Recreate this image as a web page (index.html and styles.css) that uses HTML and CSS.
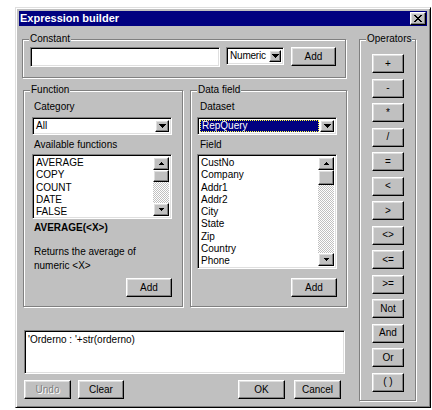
FILE: index.html
```html
<!DOCTYPE html>
<html>
<head>
<meta charset="utf-8">
<title>Expression builder</title>
<link rel="stylesheet" href="styles.css">
</head>
<body>
<div class="dialog">
  <div class="titlebar">
    <span class="title">Expression builder</span>
    <button class="close" aria-label="Close">
      <svg width="8" height="7" viewBox="0 0 8 7" shape-rendering="crispEdges">
        <rect x="0" y="0" width="2" height="1"/><rect x="6" y="0" width="2" height="1"/>
        <rect x="1" y="1" width="2" height="1"/><rect x="5" y="1" width="2" height="1"/>
        <rect x="2" y="2" width="4" height="1"/>
        <rect x="3" y="3" width="2" height="1"/>
        <rect x="2" y="4" width="4" height="1"/>
        <rect x="1" y="5" width="2" height="1"/><rect x="5" y="5" width="2" height="1"/>
        <rect x="0" y="6" width="2" height="1"/><rect x="6" y="6" width="2" height="1"/>
      </svg>
    </button>
  </div>

  <div class="client">
    <div class="main">
      <fieldset class="group constant">
        <legend>Constant</legend>
        <div class="group-body const-row">
          <div class="edit const-edit"></div>
          <div class="combo numeric">
            <span class="combo-text">Numeric</span>
            <span class="drop"><svg width="7" height="4" viewBox="0 0 7 4" shape-rendering="crispEdges"><path d="M0 0h7v1h-1v1h-1v1h-1v1h-1v-1h-1v-1h-1v-1h-1z"/></svg></span>
          </div>
          <button class="btn add-const">Add</button>
        </div>
      </fieldset>

      <div class="pickers">
        <fieldset class="group function">
          <legend>Function</legend>
          <div class="group-body picker-body">
            <div class="label">Category</div>
            <div class="combo">
              <span class="combo-text">All</span>
              <span class="drop"><svg width="7" height="4" viewBox="0 0 7 4" shape-rendering="crispEdges"><path d="M0 0h7v1h-1v1h-1v1h-1v1h-1v-1h-1v-1h-1v-1h-1z"/></svg></span>
            </div>
            <div class="label">Available functions</div>
            <div class="list list-func">
              <ul class="items">
                <li>AVERAGE</li>
                <li>COPY</li>
                <li>COUNT</li>
                <li>DATE</li>
                <li>FALSE</li>
              </ul>
              <div class="vscroll">
                <span class="arrow"><svg width="5" height="3" viewBox="0 0 5 3" shape-rendering="crispEdges"><path d="M2 0h1v1h1v1h1v1h-5v-1h1v-1h1z"/></svg></span>
                <span class="thumb thumb-func"></span>
                <span class="track"></span>
                <span class="arrow"><svg width="5" height="3" viewBox="0 0 5 3" shape-rendering="crispEdges"><path d="M0 0h5v1h-1v1h-1v1h-1v-1h-1v-1h-1z"/></svg></span>
              </div>
            </div>
            <div class="func-name">AVERAGE(&lt;X&gt;)</div>
            <div class="func-desc">Returns the average of<br>numeric &lt;X&gt;</div>
            <button class="btn add-func">Add</button>
          </div>
        </fieldset>

        <fieldset class="group datafield">
          <legend>Data field</legend>
          <div class="group-body picker-body">
            <div class="label">Dataset</div>
            <div class="combo focused">
              <span class="combo-text"><span class="selected">RepQuery</span></span>
              <span class="drop"><svg width="7" height="4" viewBox="0 0 7 4" shape-rendering="crispEdges"><path d="M0 0h7v1h-1v1h-1v1h-1v1h-1v-1h-1v-1h-1v-1h-1z"/></svg></span>
            </div>
            <div class="label">Field</div>
            <div class="list list-field">
              <ul class="items">
                <li>CustNo</li>
                <li>Company</li>
                <li>Addr1</li>
                <li>Addr2</li>
                <li>City</li>
                <li>State</li>
                <li>Zip</li>
                <li>Country</li>
                <li>Phone</li>
              </ul>
              <div class="vscroll">
                <span class="arrow"><svg width="5" height="3" viewBox="0 0 5 3" shape-rendering="crispEdges"><path d="M2 0h1v1h1v1h1v1h-5v-1h1v-1h1z"/></svg></span>
                <span class="thumb thumb-field"></span>
                <span class="track"></span>
                <span class="arrow"><svg width="5" height="3" viewBox="0 0 5 3" shape-rendering="crispEdges"><path d="M0 0h5v1h-1v1h-1v1h-1v-1h-1v-1h-1z"/></svg></span>
              </div>
            </div>
            <button class="btn add-field">Add</button>
          </div>
        </fieldset>
      </div>

      <div class="edit memo">'Orderno : '+str(orderno)</div>

      <div class="actions">
        <button class="btn undo" disabled>Undo</button>
        <button class="btn clear">Clear</button>
        <button class="btn ok">OK</button>
        <button class="btn cancel">Cancel</button>
      </div>
    </div>

    <fieldset class="group operators">
      <legend>Operators</legend>
      <div class="group-body op-list">
        <button class="btn op">+</button>
        <button class="btn op">-</button>
        <button class="btn op">*</button>
        <button class="btn op">/</button>
        <button class="btn op">=</button>
        <button class="btn op">&lt;</button>
        <button class="btn op">&gt;</button>
        <button class="btn op">&lt;&gt;</button>
        <button class="btn op">&lt;=</button>
        <button class="btn op">&gt;=</button>
        <button class="btn op">Not</button>
        <button class="btn op">And</button>
        <button class="btn op">Or</button>
        <button class="btn op">( )</button>
      </div>
    </fieldset>
  </div>
</div>
</body>
</html>
```

FILE: styles.css
```css
* {
  box-sizing: border-box;
}

body {
  margin: 0;
  background: #fff;
  color: #000;
  font: 10px/12px "Liberation Sans", Arial, sans-serif;
}

/* Window frame */
.dialog {
  margin: 7px 0 0 15px;
  width: 416px;
  height: 401px;
  padding: 3px;
  background: #c0c0c0;
  border: 1px solid;
  border-color: #dfdfdf #000 #000 #dfdfdf;
  box-shadow: inset 1px 1px #fff, inset -1px -1px #808080;
}

.titlebar {
  height: 15px;
  background: #000080;
  display: flex;
  align-items: center;
  justify-content: space-between;
  padding: 0 1px;
}

.title {
  color: #fff;
  font-weight: bold;
  font-size: 11px;
  line-height: 13px;
}

.close {
  width: 16px;
  height: 13px;
  padding: 0;
  display: flex;
  align-items: center;
  justify-content: center;
  background: #c0c0c0;
  border: 1px solid;
  border-color: #fff #000 #000 #fff;
  box-shadow: inset -1px -1px #808080, inset 1px 1px #dfdfdf;
}

/* Client area */
.client {
  display: flex;
  align-items: flex-start;
  padding: 7px 0 0 3px;
}

.main {
  width: 326px;
  display: flex;
  flex-direction: column;
}

/* Etched group boxes */
.group {
  margin: 0;
  padding: 0;
  min-width: 0;
  border: 1px solid #808080;
  box-shadow: inset 1px 1px #fff, 1px 1px #fff;
}

.group legend {
  margin-left: 6px;
  padding: 0 1px;
  line-height: 12px;
  background: #c0c0c0;
}

/* Sunken fields */
.edit,
.combo,
.list {
  background: #fff;
  border: 1px solid;
  border-color: #808080 #fff #fff #808080;
  box-shadow: inset 1px 1px #000, inset -1px -1px #dfdfdf;
}

/* Raised buttons */
.btn,
.drop,
.arrow,
.thumb {
  background: #c0c0c0;
  border: 1px solid;
  border-color: #fff #000 #000 #fff;
  box-shadow: inset -1px -1px #808080, inset 1px 1px #dfdfdf;
}

.btn {
  padding: 0;
  height: 19px;
  font: inherit;
  color: #000;
  display: flex;
  align-items: center;
  justify-content: center;
}

.btn[disabled] {
  color: #808080;
  text-shadow: 1px 1px #fff;
}

/* Constant */
.constant {
  width: 324px;
}

.const-row {
  display: flex;
  align-items: flex-start;
  padding: 2px 7px 10px 7px;
}

.const-edit {
  width: 190px;
  height: 20px;
}

.numeric {
  width: 58px;
  height: 19px;
  margin-left: 6px;
}

.numeric .combo-text {
  letter-spacing: -0.2px;
}

.numeric .drop {
  width: 12px;
}

.add-const {
  width: 45px;
  height: 19px;
  margin-left: 7px;
}

/* Combo boxes */
.combo {
  display: flex;
  height: 18px;
  padding: 2px;
}

.combo-text {
  flex: 1;
  padding-left: 1px;
  display: flex;
  align-items: center;
  line-height: 12px;
}

.drop {
  width: 14px;
  display: flex;
  align-items: center;
  justify-content: center;
}

.focused .combo-text {
  padding: 0 1px 0 0;
}

.selected {
  flex: 1;
  align-self: stretch;
  display: flex;
  align-items: center;
  padding-left: 2px;
  background: #000080;
  color: #fff;
  outline: 1px dotted #ffff40;
  outline-offset: -1px;
}

/* Function / Data field */
.pickers {
  display: flex;
  align-items: stretch;
  margin-top: 6px;
}

.function,
.datafield {
  display: flex;
  flex-direction: column;
}

.function {
  width: 160px;
  margin-left: 1px;
}

.datafield {
  width: 157px;
  margin-left: 7px;
}

.picker-body {
  flex: 1;
  display: flex;
  flex-direction: column;
}

.function .picker-body {
  padding: 0 10px 9px 8px;
}

.datafield .picker-body {
  padding: 0 9px 9px 6px;
}

.label {
  margin-top: 4px;
  padding-left: 2px;
  line-height: 12px;
}

.picker-body .label:first-child {
  margin-top: 5px;
}

.datafield .label {
  padding-left: 3px;
}

.label + .combo {
  margin-top: 4px;
}

.list {
  display: flex;
  margin-top: 3px;
  padding: 2px;
}

.list-func {
  height: 65px;
}

.list-field {
  height: 115px;
}

.items {
  flex: 1;
  margin: 0;
  padding: 0 0 0 1px;
  list-style: none;
  line-height: 12.3px;
}

.vscroll {
  width: 16px;
  display: flex;
  flex-direction: column;
}

.arrow {
  height: 13px;
  display: flex;
  align-items: center;
  justify-content: center;
}

.thumb-func {
  height: 12px;
}

.thumb-field {
  height: 15px;
}

.track {
  flex: 1;
  background-color: #fff;
  background-image: conic-gradient(#c0c0c0 25%, #fff 0 50%, #c0c0c0 0 75%, #fff 0);
  background-size: 2px 2px;
}

.func-name {
  margin-top: 3px;
  padding-left: 2px;
  font-weight: bold;
  line-height: 12px;
}

.func-desc {
  margin-top: 11px;
  padding-left: 2px;
  line-height: 14px;
}

.add-func {
  width: 46px;
  margin-top: 5px;
  align-self: flex-end;
}

.add-field {
  width: 46px;
  margin-top: auto;
  align-self: flex-end;
}

/* Expression text */
.memo {
  width: 321px;
  height: 44px;
  margin: 23px 0 0 2px;
  padding: 3px;
  line-height: 12px;
}

/* Bottom buttons */
.actions {
  display: flex;
  margin-top: 6px;
  padding-left: 2px;
  padding-right: 7px;
}

.undo {
  width: 47px;
}

.clear {
  width: 46px;
  margin-left: 7px;
}

.ok {
  width: 47px;
  margin-left: auto;
}

.cancel {
  width: 47px;
  margin-left: 9px;
}

/* Operators */
.operators {
  width: 57px;
  height: 368px;
  margin-left: 11px;
}

.op-list {
  display: flex;
  flex-direction: column;
  gap: 5.5px;
  padding: 9px 0 0 12px;
}

.op {
  width: 32px;
  height: 19px;
}
```
